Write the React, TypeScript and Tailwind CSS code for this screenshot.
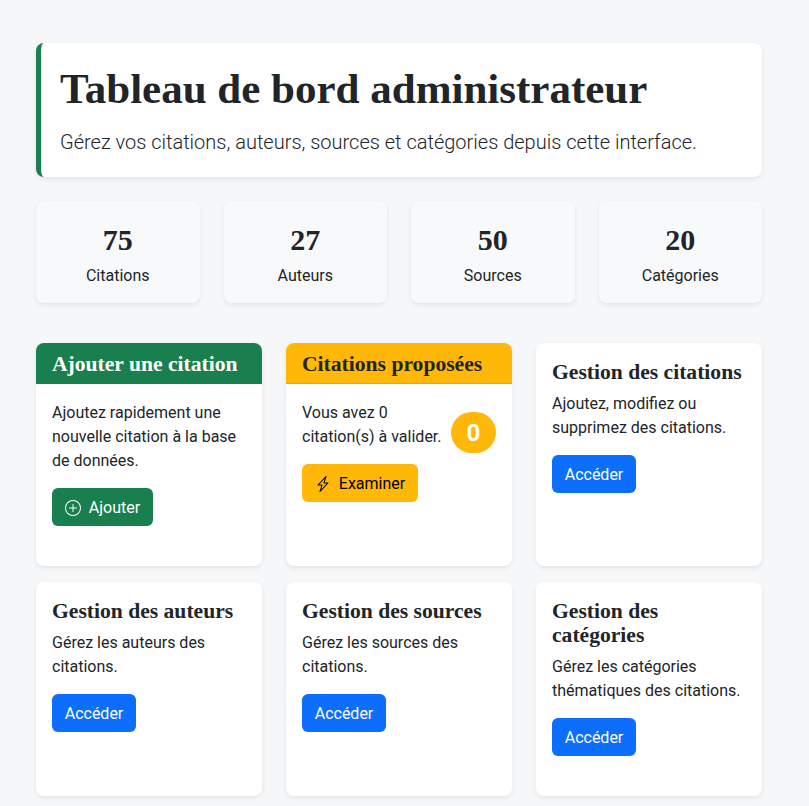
import React from "react";
import { BsPlusCircle, BsLightningCharge } from "react-icons/bs";

const serif = "font-['Liberation_Serif',serif]";

function Stat({ n, label }: { n: string; label: string }) {
  return (
    <div className="h-[102px] rounded-lg bg-[#f8f9fa] shadow-[0_2px_5px_rgba(0,0,0,0.08)] flex flex-col items-center pt-[20px]">
      <div className={`${serif} font-bold text-[30px] leading-[38px] text-[#212529]`}>{n}</div>
      <div className="mt-[5px] text-base leading-6 text-[#212529]">{label}</div>
    </div>
  );
}

function Manage({ title, text }: { title: string; text: string }) {
  return (
    <div className="rounded-lg bg-white shadow-[0_2px_5px_rgba(0,0,0,0.08)] p-4">
      <h3 className={`${serif} font-bold text-[21.6px] leading-[24px] pt-px text-[#212529] mb-[8px]`}>{title}</h3>
      <p className="text-base leading-6 text-[#212529] mb-[15px]">{text}</p>
      <button className="h-[38px] w-[84px] pt-px rounded-md bg-[#0d6efd] text-white text-base flex items-center justify-center">Accéder</button>
    </div>
  );
}

export default function App() {
  return (
    <div className="min-h-[806px] bg-[#f6f7f9] pl-[36px] pr-[47px] pt-[43px] pb-[10px] font-['Roboto',sans-serif]">
      <div className="h-[134px] rounded-lg bg-white border-l-[5px] border-[#1a7f4e] shadow-[0_2px_5px_rgba(0,0,0,0.08)] pl-[19px] pt-[20px]">
        <h1 className={`${serif} font-bold text-[43px] leading-[52px] text-[#212529]`}>Tableau de bord administrateur</h1>
        <p className="mt-[12px] text-xl font-light leading-[30px] text-[#212529]">Gérez vos citations, auteurs, sources et catégories depuis cette interface.</p>
      </div>

      <div className="mt-[24px] grid grid-cols-4 gap-x-[24px]">
        <Stat n="75" label="Citations" />
        <Stat n="27" label="Auteurs" />
        <Stat n="50" label="Sources" />
        <Stat n="20" label="Catégories" />
      </div>

      <div className="mt-[40px] grid grid-cols-3 gap-x-[24px] gap-y-[16px] grid-rows-[223px_214px]">
        <div className="rounded-lg bg-white shadow-[0_2px_5px_rgba(0,0,0,0.08)] overflow-hidden">
          <div className="h-[41px] bg-[#1a7f4e] px-4 pt-[2px] flex items-center">
            <h3 className={`${serif} font-bold text-[21.6px] text-white leading-none`}>Ajouter une citation</h3>
          </div>
          <div className="px-4 pt-[17px]">
            <p className="text-base leading-6 text-[#212529] mb-[15px]">Ajoutez rapidement une nouvelle citation à la base de données.</p>
            <button className="h-[38px] w-[101px] pt-px rounded-md bg-[#1a7f4e] text-white text-base flex items-center justify-center gap-2">
              <BsPlusCircle className="w-4 h-4" />
              Ajouter
            </button>
          </div>
        </div>

        <div className="rounded-lg bg-white shadow-[0_2px_5px_rgba(0,0,0,0.08)] overflow-hidden">
          <div className="h-[41px] bg-[#ffb807] border-b border-[#e5a50a] px-4 pt-[3px] flex items-center">
            <h3 className={`${serif} font-bold text-[21.6px] text-[#212529] leading-none`}>Citations proposées</h3>
          </div>
          <div className="px-4 pt-[17px]">
            <div className="flex items-center justify-between">
              <p className="text-base leading-6 text-[#212529] mb-[15px]">Vous avez 0<br />citation(s) à valider.</p>
              <span className="w-[45px] h-[41px] rounded-full bg-[#ffb807] text-white font-bold text-2xl flex items-center justify-center">0</span>
            </div>
            <button className="h-[38px] w-[116px] pt-px rounded-md bg-[#ffb807] text-black text-base flex items-center justify-center gap-2">
              <BsLightningCharge className="w-4 h-4" />
              Examiner
            </button>
          </div>
        </div>

        <Manage title="Gestion des citations" text="Ajoutez, modifiez ou supprimez des citations." />
        <Manage title="Gestion des auteurs" text="Gérez les auteurs des citations." />
        <Manage title="Gestion des sources" text="Gérez les sources des citations." />
        <Manage title="Gestion des catégories" text="Gérez les catégories thématiques des citations." />
      </div>
    </div>
  );
}
